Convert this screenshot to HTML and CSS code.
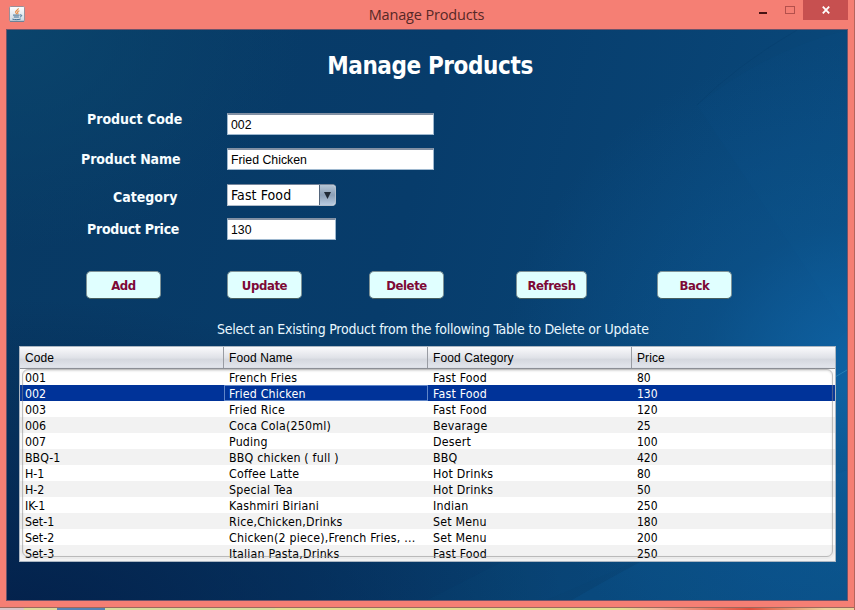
FILE: index.html
```
<!DOCTYPE html>
<html lang="en">
<head>
<meta charset="utf-8">
<title>Manage Products</title>
<link rel="stylesheet" href="styles.css">
</head>
<body>
<div class="window">
  <header class="titlebar">
    <svg class="java" viewBox="0 0 16 16" width="16" height="16">
      <defs><linearGradient id="tile" x2="0" y2="1"><stop stop-color="#fff"/><stop offset="1" stop-color="#cbd8e2"/></linearGradient></defs>
      <rect x=".5" y=".5" width="15" height="15" rx="1.2" fill="url(#tile)" stroke="#9b8f98"/>
      <path d="M1 15.3h14" stroke="#647d96"/>
      <path d="M9.3 2.2c.6 1.7-3.6 2.5-2.6 4.3.3.6.9.9.8 1.7M10.4 4.7c-1.4.5-2.3 1.2-1.6 2.1.3.5.2.9-.3 1.3" fill="none" stroke="#e5863c" stroke-width="1.1"/>
      <path d="M4 9.1h6.6M4.8 11h5.1M3.4 13.1c2.6.8 6.3.7 8.3-.1M11 9c2.3-.7 2.3 1.5-.2 2.1" fill="none" stroke="#3d6c91" stroke-width="1"/>
    </svg>
    <h1 class="caption">Manage Products</h1>
    <div class="controls">
      <svg class="min" width="8" height="2"><rect width="8" height="2" fill="#461313"/></svg>
      <svg class="max" width="10" height="8"><rect x=".5" y=".5" width="9" height="7" fill="none" stroke="#b4504c"/></svg>
      <div class="close"><svg width="8" height="8" viewBox="0 0 8 8"><path d="M.8.6l6.4 6.8M7.2.6L.8 7.4" stroke="#fff" stroke-width="1.8"/></svg></div>
    </div>
  </header>
  <main class="panel">
    <svg class="swirl" viewBox="0 0 840 570" width="840" height="570">
      <path d="M690 75Q760 20 840 0V440L540 570H420Q720 420 840 300Z" fill="#1470b4" opacity=".03"/>
      <path d="M565 570Q720 480 840 440V570Z" fill="#1275be" opacity=".12"/>
      <path d="M690 75Q730 35 790 0" fill="none" stroke="#032f5a" opacity=".15"/>
      <path d="M840 340L828 347" fill="none" stroke="#3ea0cc" opacity=".5"/>
    </svg>
    <h2 class="heading">Manage Products</h2>
    <form class="form">
      <div class="row r1"><label class="l-code">Product Code</label><div class="field">002</div></div>
      <div class="row r2"><label class="l-name">Product Name</label><div class="field">Fried Chicken</div></div>
      <div class="row r3"><label class="l-cat">Category</label><div class="combo"><span>Fast Food</span><i><svg width="7" height="7"><path d="M0 0h7L3.5 7z" fill="#202a36"/></svg></i></div></div>
      <div class="row r4"><label class="l-price">Product Price</label><div class="field short">130</div></div>
    </form>
    <div class="buttons">
      <div class="btn">Add</div><div class="btn">Update</div><div class="btn">Delete</div><div class="btn">Refresh</div><div class="btn">Back</div>
    </div>
    <p class="hint">Select an Existing Product from the following Table to Delete or Update</p>
    <div class="table">
      <div class="tr head"><div>Code</div><div>Food Name</div><div>Food Category</div><div>Price</div></div>
      <div class="tr"><div>001</div><div>French Fries</div><div>Fast Food</div><div>80</div></div>
      <div class="tr sel"><div>002</div><div class="focus">Fried Chicken</div><div>Fast Food</div><div>130</div></div>
      <div class="tr"><div>003</div><div>Fried Rice</div><div>Fast Food</div><div>120</div></div>
      <div class="tr alt"><div>006</div><div>Coca Cola(250ml)</div><div>Bevarage</div><div>25</div></div>
      <div class="tr"><div>007</div><div>Puding</div><div>Desert</div><div>100</div></div>
      <div class="tr alt"><div>BBQ-1</div><div>BBQ chicken ( full )</div><div>BBQ</div><div>420</div></div>
      <div class="tr"><div>H-1</div><div>Coffee Latte</div><div>Hot Drinks</div><div>80</div></div>
      <div class="tr alt"><div>H-2</div><div>Special Tea</div><div>Hot Drinks</div><div>50</div></div>
      <div class="tr"><div>IK-1</div><div>Kashmiri Biriani</div><div>Indian</div><div>250</div></div>
      <div class="tr alt"><div>Set-1</div><div>Rice,Chicken,Drinks</div><div>Set Menu</div><div>180</div></div>
      <div class="tr"><div>Set-2</div><div>Chicken(2 piece),French Fries, ...</div><div>Set Menu</div><div>200</div></div>
      <div class="tr alt"><div>Set-3</div><div>Italian Pasta,Drinks</div><div>Fast Food</div><div>250</div></div>
      <div class="inset"></div>
    </div>
  </main>
  <footer class="taskbar"><i class="t1"></i><i class="t2"></i><i class="t3"></i><i class="t4"></i></footer>
</div>
</body>
</html>
```
FILE: styles.css
```
* { box-sizing: border-box; margin: 0; }
body { width: 855px; height: 610px; overflow: hidden; font: 12px/16px "DejaVu Sans Condensed", "DejaVu Sans", sans-serif; font-stretch: condensed; }
.window { width: 855px; height: 610px; display: flex; flex-direction: column; background: #f57f74; border-right: 1px solid #b5655d; }
.titlebar { height: 29px; display: grid; grid-template-columns: 60px 1fr 96px; }
.java { margin: 6px 0 0 9px; }
.caption { font: 400 14.5px/20px "Open Sans", sans-serif; color: #552827; text-align: center; padding: 5px 0 0 35px; letter-spacing: -.15px; }
.controls { display: flex; align-items: flex-start; }
.min { margin: 12px 0 0 1px; }
.max { margin: 6px 0 0 18px; }
.close { margin-left: 8px; width: 45px; height: 20px; background: #c75050; display: flex; align-items: center; justify-content: center; }
.panel { position: relative; margin-left: 6px; width: 842px; height: 572px; border: 1px solid #6e536a; display: flex; flex-direction: column;
  background: radial-gradient(ellipse 360px 330px at 102% 60%, #0f63a5 0%, #0e5d9c66 45%, #0e5d9c00 100%), radial-gradient(ellipse 560px 330px at 0 105%, #03204a 0%, #03204a00 100%), radial-gradient(ellipse 300px 220px at 0 0, #0a446c 0%, #0a446c00 100%), linear-gradient(105deg, #083963 0%, #073c6b 45%, #0a4b7e 100%); }
.swirl { position: absolute; inset: 0; }
.panel > :not(.swirl) { position: relative; }
.heading { height: 83px; padding-top: 20px; text-align: center; padding-left: 6px; font: 700 24px/32px "DejaVu Sans Condensed", sans-serif; font-stretch: condensed; letter-spacing: -.4px; color: #fff; }
.form { height: 158px; color: #f7fdff; }
.row { display: flex; align-items: flex-start; }
.row label { font-weight: 700; font-size: 14px; line-height: 18px; width: 220px; white-space: nowrap; }
.r1 { height: 35px; } .r2 { height: 36px; } .r3 { height: 34px; }
.l-code, .l-price { padding-left: 80px; } .l-name { padding-left: 74px; padding-top: 2px; letter-spacing: -.1px; } .l-cat { padding-left: 106px; padding-top: 4px; } .l-price { padding-top: 2px; letter-spacing: -.28px; }
.l-code { margin-top: -3px; }
.field { width: 207px; height: 22px; background: #fff; border: 1px solid #9eb8cf; border-top: 2px solid #8290a3; padding: 2px 3px; font: 12.3px/17px "Liberation Sans", sans-serif; color: #000; }
.short { width: 109px; }
.combo { display: flex; width: 109px; height: 22px; background: #fff; border: 1px solid #b2bdca; border-top-color: #77869b; border-radius: 0 4px 4px 0; color: #000; font-size: 14px; line-height: 20px; letter-spacing: .1px; }
.combo span { flex: 1; padding-left: 3px; }
.combo i { width: 16px; background: linear-gradient(#b6c6d6, #8b9fb7 50%, #b9cbe0); border-left: 1px solid #53657b; border-radius: 0 3px 3px 0; display: flex; align-items: center; justify-content: center; }
.buttons { height: 46px; padding-left: 79px; display: grid; grid-template-columns: 141px 142px 147px 141px 75px; }
.btn { width: 75px; height: 28px; background: #e0ffff; border: 1px solid #7f9397; border-bottom-color: #49605f; border-radius: 5px; color: #7d0936; font-weight: 700; font-size: 13px; letter-spacing: -.4px; line-height: 27px; text-align: center; }
.btn:nth-child(4) { width: 71px; }
.hint { height: 29px; padding-left: 210px; line-height: 25px; font-size: 14px; letter-spacing: -.225px; color: #e8f7ff; white-space: nowrap; }
.table { margin-left: 12px; width: 817px; height: 216px; border: 1px solid #abb6c2; overflow: hidden; background: #fff; color: #000; }
.tr { height: 16px; display: grid; grid-template-columns: 204px 204px 204px 203px; line-height: 18px; background: #fff; }
.tr > div { height: 16px; padding-left: 5px; white-space: nowrap; letter-spacing: .2px; font-size: 12.3px; }
.tr > div:first-child { letter-spacing: 0; }
.tr > div:last-child { letter-spacing: 0; font-size: 12px; }
.alt { background: #f2f2f2; }
.sel { background: #003399; color: #fff; }
.sel .focus { border: 1px solid #6086c8; padding-left: 4px; line-height: 16px; }
.head { height: 22px; line-height: 22px; background: linear-gradient(#fafafc, #e0e2e8 50%, #d5d8df 60%, #e3e6ed); border-bottom: 1px solid #8b8e95; font-family: "Liberation Sans", sans-serif; }
.head > div, .head > div:first-child, .head > div:last-child { height: 21px; border-right: 1px solid #999ca3; font-size: 12px; letter-spacing: .1px; }
.head > div:last-child { border: 0; }
.inset { position: absolute; left: 2px; right: 2px; top: 22px; bottom: 4px; border: 1px solid #8888; border-radius: 6px; box-shadow: inset 0 1px 2px #7774, 0 0 0 2px #9991; }
.taskbar { margin-top: 6px; height: 3px; display: flex; background: #ded99a; border-top: 1px solid #9e685d; }
.t1 { width: 24px; background: #d9c4c8; } .t2 { width: 48px; margin-left: 33px; background: #5482b4; } .t3 { width: 170px; background: #d8dc9b; } .t4 { flex: 1; background: linear-gradient(90deg, #e4dd8f 60%, #f3b49b 66%, #df4e3d 82%, #ecd19b 95%); }
```
